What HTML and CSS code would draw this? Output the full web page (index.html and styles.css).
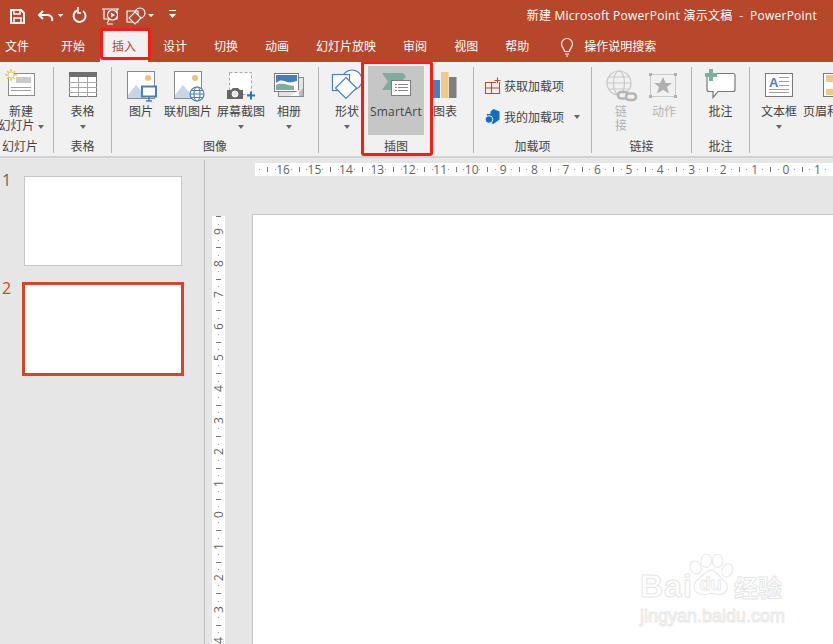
FILE: index.html
```html
<!DOCTYPE html>
<html lang="zh">
<head>
<meta charset="utf-8">
<title>PowerPoint</title>
<link rel="stylesheet" href="styles.css">
</head>
<body>
<div class="app">
  <header class="titlebar">
    <svg class="qat" viewBox="0 0 190 31">
      <g fill="none" stroke="#fff" stroke-width="2">
        <path d="M11 10h10l3 3v10H11z"/>
        <path d="M14 10v4h6v-4M14 23v-5h7v5" stroke-width="1.5"/>
        <path d="M43 11l-4 4 4 4" stroke-width="2"/>
        <path d="M39 15h9a4.500 4.500 0 0 1 4 6" stroke-width="2"/>
        <path d="M83 11a6 6 0 1 1-6-.5" stroke-width="2"/>
        <path d="M77 7v6h3" stroke-width="1.500" transform="translate(1 0)"/>
        <g stroke-width="1.200">
          <path d="M102 9h17M104 9v10h13V9"/>
          <circle cx="112.500" cy="15" r="5" fill="#b7472b"/>
          <path d="M111 12.500v5l4-2.500z" fill="#fff" stroke="none"/>
          <path d="M109 20l-2 3M107 24h6"/>
        </g>
        <g stroke-width="1.100">
          <path d="M127 11h11v11h-11z"/>
          <circle cx="140" cy="13" r="5"/>
          <path d="M135 12l6 6-6 6-6-6z" fill="#b7472b"/>
        </g>
      </g>
      <path d="M57.500 14h6l-3 3zM148 14h6l-3 3zM169 14h7l-3.500 4z" fill="#fff"/>
      <path d="M169 10.500h7" stroke="#fff" fill="none"/>
    </svg>
    <div class="doc-title">新建 Microsoft PowerPoint 演示文稿&nbsp; -&nbsp; PowerPoint</div>
  </header>

  <nav class="tabs">
    <span class="tab tab-file">文件</span>
    <span class="tab">开始</span>
    <span class="tab tab-active">插入</span>
    <span class="tab">设计</span>
    <span class="tab">切换</span>
    <span class="tab">动画</span>
    <span class="tab">幻灯片放映</span>
    <span class="tab">审阅</span>
    <span class="tab">视图</span>
    <span class="tab">帮助</span>
    <span class="tab tab-search">
      <svg class="bulb" viewBox="0 0 18 20"><path d="M6.500 14.500c0-3-3-4-3-7.500a5.500 5.500 0 0 1 11 0c0 3.500-3 4.500-3 7.500zM7 17h4M8 19h2" fill="none" stroke="#fff" stroke-width="1.200"/></svg>
      操作说明搜索
    </span>
  </nav>

  <section class="ribbon">
    <div class="group g-slide">
      <div class="btns">
        <div class="btn w42">
          <svg class="ico" viewBox="0 66 42 38">
            <rect x="8.500" y="73.500" width="26" height="22" fill="#fff" stroke="#8a8a8a"/>
            <rect x="16" y="77" width="15" height="6" fill="#c9c9c9"/>
            <path d="M11 87.500h20M11 90.500h20" stroke="#a0a0a0"/>
            <g stroke="#efc56f" stroke-width="1.600"><path d="M11 69v12M5 75h12M7 71l8 8M15 71l-8 8"/></g>
            <circle cx="11" cy="75" r="3" fill="#fff" stroke="#efc56f"/>
          </svg>
          <span class="cap">新建</span>
          <span class="cap">幻灯片 <i class="caret"></i></span>
        </div>
      </div>
      <div class="glabel">幻灯片</div>
    </div>

    <div class="group g-table">
      <div class="btns">
        <div class="btn w57">
          <svg class="ico" viewBox="54 66 57 38">
            <rect x="69.500" y="72.500" width="27" height="24" fill="#fff" stroke="#7a7a7a"/>
            <rect x="69" y="72" width="28" height="5" fill="#6f6f6f"/>
            <path d="M69 82.500h28M69 87.500h28M69 92.500h28M78.500 77v20M87.500 77v20" stroke="#a8a8a8"/>
          </svg>
          <span class="cap">表格</span>
          <span class="cap"><i class="caret"></i></span>
        </div>
      </div>
      <div class="glabel">表格</div>
    </div>

    <div class="group g-image">
      <div class="btns">
        <div class="btn w46">
          <svg class="ico" viewBox="118 66 46 38">
            <rect x="127.500" y="71.500" width="27" height="27" fill="#fff" stroke="#8a8a8a"/>
            <circle cx="148" cy="78" r="3" fill="#edc27a"/>
            <path d="M128 98v-3l8-10 6 7 4 6z" fill="#c5d6e8"/>
            <rect x="142" y="86.500" width="14" height="10" fill="#fff" stroke="#4a7ebb" stroke-width="2"/>
            <path d="M146 101h6M149 97v4" stroke="#4a7ebb" stroke-width="1.500"/>
          </svg>
          <span class="cap">图片</span>
        </div>
        <div class="btn w48">
          <svg class="ico" viewBox="164 66 48 38">
            <rect x="174.500" y="71.500" width="27" height="27" fill="#fff" stroke="#8a8a8a"/>
            <circle cx="195" cy="78" r="3" fill="#edc27a"/>
            <path d="M175 98v-3l8-10 6 7 4 6z" fill="#c5d6e8"/>
            <g fill="#fff" stroke="#4a7ebb" stroke-width="1.200">
              <circle cx="197" cy="94" r="7"/>
              <ellipse cx="197" cy="94" rx="3" ry="7"/>
              <path d="M190 94h14M191 90.500h12M191 97.500h12"/>
            </g>
          </svg>
          <span class="cap">联机图片</span>
        </div>
        <div class="btn w58">
          <svg class="ico" viewBox="212 66 58 38">
            <rect x="229.500" y="72.500" width="22" height="22" fill="#fff" stroke="#a8a8a8" stroke-dasharray="3 2"/>
            <path d="M227 90h4l2-2h5l2 2h3v9h-16z" fill="#666"/>
            <circle cx="235" cy="94" r="3" fill="#e8e8e8" stroke="#fff"/>
            <path d="M247 95.500h8M251 91.500v8" stroke="#2f75b5" stroke-width="2"/>
          </svg>
          <span class="cap">屏幕截图</span>
          <span class="cap"><i class="caret"></i></span>
        </div>
        <div class="btn w38">
          <svg class="ico" viewBox="270 66 38 38">
            <rect x="278.500" y="77.500" width="25" height="19" fill="#e4e4e4" stroke="#8a8a8a"/>
            <path d="M296 96l7-8v8z" fill="#bcbcbc"/>
            <rect x="274.500" y="73.500" width="24" height="18" fill="#fff" stroke="#7a7a7a"/>
            <rect x="276" y="75" width="21" height="8" fill="#4a7ebb"/>
            <path d="M276 83c5-4 8-2 11-1s6 0 10-1v3h-21z" fill="#fff"/>
            <path d="M276 85c5-2 9-1 12 0l6 1v4h-18z" fill="#7fac9c"/>
            <path d="M290 96l9-6v6z" fill="#fff"/>
          </svg>
          <span class="cap">相册</span>
          <span class="cap"><i class="caret"></i></span>
        </div>
      </div>
      <div class="glabel">图像</div>
    </div>

    <div class="group g-illus">
      <div class="btns">
        <div class="btn w38">
          <svg class="ico" viewBox="328 66 38 38">
            <circle cx="352" cy="80" r="10" fill="#fff" stroke="#4a7ebb" stroke-width="1.200"/>
            <rect x="332.500" y="74.500" width="17" height="16" fill="#fff" stroke="#4a7ebb" stroke-width="1.200"/>
            <path d="M346 77.500l10.500 10.500-10.500 10.500-10.500-10.500z" fill="#fff" stroke="#4a7ebb" stroke-width="1.200"/>
          </svg>
          <span class="cap">形状</span>
          <span class="cap"><i class="caret"></i></span>
        </div>
        <div class="btn w56 btn-hot">
          <svg class="ico" viewBox="368 66 56 38">
            <path d="M382 73h21v7h-12v10h-9l6-8.500z" fill="#7fac9c"/>
            <path d="M403 73l3 3.500-3 3.500z" fill="#7fac9c"/>
            <rect x="391.500" y="80.500" width="19" height="15" fill="#fff" stroke="#7d7d7d"/>
            <path d="M395 84.500h2M398 84.500h10M395 87.500h2M398 87.500h10M395 90.500h2M398 90.500h10" stroke="#8a8a8a"/>
          </svg>
          <span class="cap cap-sa">SmartArt</span>
        </div>
        <div class="btn w42">
          <svg class="ico" viewBox="424 66 42 38">
            <rect x="431" y="80" width="9" height="18" fill="#4a7ebb"/>
            <rect x="441" y="72" width="7.500" height="26" fill="#edc98a"/>
            <rect x="449" y="77" width="7.500" height="21" fill="#7f7f7f"/>
          </svg>
          <span class="cap">图表</span>
        </div>
      </div>
      <div class="glabel">插图</div>
      <div class="callout"></div>
    </div>

    <div class="group g-addin">
      <div class="btns rows">
        <div class="row">
          <svg class="ico-s" viewBox="0 0 18 18">
            <path d="M1.500 5.500h6v11h-6zM7.500 5.500h8v11h-8zM1.500 11h14M7.500 5.500V11" fill="none" stroke="#d04423" stroke-width="1.100"/>
            <path d="M10 3.500h7M13.500 0v7" stroke="#f1f1f1" stroke-width="3"/>
            <path d="M10.500 3.500h6M13.500 .500v6" stroke="#d04423" stroke-width="1.100"/>
          </svg>
          <span>获取加载项</span>
        </div>
        <div class="row">
          <svg class="ico-s" viewBox="0 0 18 18">
            <path d="M9.500 1l6 2.500v8L9.500 16 7 15v-5H3V6h3.500V3.500z" fill="#0f6fc6"/>
            <circle cx="5" cy="11.500" r="3.800" fill="#0f6fc6" stroke="#f1f1f1"/>
          </svg>
          <span>我的加载项</span>
          <i class="caret caret-row"></i>
        </div>
      </div>
      <div class="glabel">加载项</div>
    </div>

    <div class="group g-link">
      <div class="btns">
        <div class="btn w44 off">
          <svg class="ico" viewBox="599 66 44 38">
            <g fill="none" stroke="#c9c9c9" stroke-width="1.200">
              <circle cx="619" cy="83" r="12"/>
              <ellipse cx="619" cy="83" rx="5.500" ry="12"/>
              <path d="M607 83h24M609 77h20M609 89h20"/>
            </g>
            <g fill="#f1f1f1" stroke="#b5b5b5" stroke-width="2.600">
              <rect x="618" y="92" width="10" height="6.500" rx="3.200"/>
              <rect x="626" y="93.500" width="10" height="6.500" rx="3.200"/>
            </g>
          </svg>
          <span class="cap">链</span>
          <span class="cap">接</span>
        </div>
        <div class="btn w42 off">
          <svg class="ico" viewBox="643 66 42 38">
            <rect x="650.500" y="74.500" width="25" height="22" fill="none" stroke="#c9c9c9"/>
            <path d="M649 73h3v3h-3zM674 73h3v3h-3zM649 95h3v3h-3zM674 95h3v3h-3z" fill="#b0b0b0"/>
            <path d="M663 77l2.800 6h6.200l-5 4 2 6.500-6-3.800-6 3.800 2-6.500-5-4h6.200z" fill="#b0b0b0"/>
          </svg>
          <span class="cap">动作</span>
        </div>
      </div>
      <div class="glabel">链接</div>
    </div>

    <div class="group g-comment">
      <div class="btns">
        <div class="btn w57">
          <svg class="ico" viewBox="692 66 57 38">
            <path d="M709 73.500h24a2 2 0 0 1 2 2v14a2 2 0 0 1-2 2h-15l-5 6v-6h-4a2 2 0 0 1-2-2v-14z" fill="#fff" stroke="#7a7a7a" stroke-width="1.200"/>
            <path d="M705 75h12M711 69v12" stroke="#7fb09c" stroke-width="4"/>
          </svg>
          <span class="cap">批注</span>
        </div>
      </div>
      <div class="glabel">批注</div>
    </div>

    <div class="group g-text">
      <div class="btns">
        <div class="btn w48 first-text">
          <svg class="ico" viewBox="755 66 48 38">
            <rect x="765.500" y="73.500" width="27" height="23" fill="#fff" stroke="#7a7a7a"/>
            <text class="ico-a" x="769" y="87">A</text>
            <path d="M779 77.500h10M779 81.500h10M779 85.500h10M769 89.500h20M769 92.500h20" stroke="#a0a0a0"/>
          </svg>
          <span class="cap">文本框</span>
          <span class="cap"><i class="caret"></i></span>
        </div>
        <div class="btn w60">
          <svg class="ico" viewBox="802 66 60 38">
            <rect x="822.500" y="73.500" width="27" height="23" fill="#fff" stroke="#7a7a7a"/>
            <rect x="825" y="75" width="22" height="7" fill="#edc98a"/>
            <rect x="825" y="89" width="22" height="6" fill="#edc98a"/>
          </svg>
          <span class="cap">页眉和页脚</span>
        </div>
      </div>
    </div>
  </section>

  <main class="workspace">
    <aside class="thumbs">
      <div class="thumb-row"><span class="num">1</span><div class="thumb"></div></div>
      <div class="thumb-row thumb-row-on"><span class="num">2</span><div class="thumb"></div></div>
    </aside>
    <div class="editor">
      <div class="hruler">
        <span class="hlead"></span>
        <span class="hu">16</span><span class="hu">15</span><span class="hu">14</span><span class="hu">13</span><span class="hu">12</span><span class="hu">11</span><span class="hu">10</span><span class="hu">9</span><span class="hu">8</span><span class="hu">7</span><span class="hu">6</span><span class="hu">5</span><span class="hu">4</span><span class="hu">3</span><span class="hu">2</span><span class="hu">1</span><span class="hu">0</span><span class="hu">1</span>
      </div>
      <div class="stage">
        <div class="vruler">
          <span class="vu"><b>9</b></span><span class="vu"><b>8</b></span><span class="vu"><b>7</b></span><span class="vu"><b>6</b></span><span class="vu"><b>5</b></span><span class="vu"><b>4</b></span><span class="vu"><b>3</b></span><span class="vu"><b>2</b></span><span class="vu"><b>1</b></span><span class="vu"><b>0</b></span><span class="vu"><b>1</b></span><span class="vu"><b>2</b></span><span class="vu"><b>3</b></span><span class="vu"><b>4</b></span>
        </div>
        <div class="slide"></div>
      </div>
    </div>
  </main>

  <div class="watermark">
    <div class="wm-top">
      <span class="wm-bai">Bai</span>
      <svg class="wm-paw" viewBox="0 0 48 50">
        <g fill="#fff" stroke="#e9e9e9" stroke-width="1.200">
          <ellipse cx="8" cy="14" rx="5.500" ry="7" transform="rotate(-25 8 14)"/>
          <ellipse cx="19" cy="7" rx="5.500" ry="7"/>
          <ellipse cx="31" cy="7" rx="5.500" ry="7"/>
          <ellipse cx="41" cy="17" rx="5.500" ry="7" transform="rotate(25 41 17)"/>
          <path d="M24 17c6 0 8 7 13 10 7 5 4 16-5 15-3 0-5-1-8-1s-6 2-10 1C6 41 4 32 10 27c5-3 7-10 14-10z"/>
        </g>
        <text class="wm-du" x="12" y="38">du</text>
      </svg>
      <span class="wm-cn">经验</span>
    </div>
    <div class="wm-url">jingyan.baidu.com</div>
  </div>
</div>
</body>
</html>
```

FILE: styles.css
```css
* { box-sizing: border-box; }
html, body { margin: 0; padding: 0; }
body {
  width: 833px;
  height: 644px;
  overflow: hidden;
  font-family: "Open Sans", "Noto Sans CJK SC", sans-serif;
  font-size: 12px;
  color: #444;
  background: #e6e6e6;
}
.app { position: relative; width: 833px; height: 644px; overflow: hidden; display: flex; flex-direction: column; }

/* title bar */
.titlebar {
  height: 31px;
  flex: none;
  background: #b7472b;
  color: #fff;
  display: flex;
  align-items: center;
  justify-content: space-between;
  padding-right: 16px;
}
.qat { width: 190px; height: 31px; display: block; }
.doc-title { font-size: 12px; line-height: 31px; white-space: nowrap; letter-spacing: .25px; }

/* tabs */
.tabs {
  height: 31px;
  flex: none;
  background: #b7472b;
  color: #fff;
  display: flex;
  align-items: stretch;
  gap: 27px;
  padding-left: 5px;
  line-height: 31px;
  white-space: nowrap;
}
.tab { position: relative; }
.tab-file { margin-right: 5px; }
.tab-active {
  background: #f1f1f1;
  color: #b7472b;
  padding: 0 12px;
  margin: 0 -12px;
}
.tab-active::after {
  content: "";
  position: absolute;
  box-sizing: border-box;
  left: 0;
  top: -3px;
  width: 51px;
  height: 32px;
  border: 3px solid #f81c14;
  border-radius: 3px;
}
.tab-search { display: flex; align-items: center; gap: 8px; margin-left: 2px; }
.bulb { width: 18px; height: 20px; display: block; }

/* ribbon */
.ribbon {
  height: 96px;
  flex: none;
  background: #f1f1f1;
  border-bottom: 2px solid #d2d2d2;
  display: flex;
  align-items: flex-start;
  padding-top: 5px;
  overflow: hidden;
}
.group {
  position: relative;
  flex: none;
  height: 86px;
  display: flex;
  flex-direction: column;
  border-right: 1px solid #b4b4b4;
}
.btns { display: flex; height: 69px; margin-top: -1px; flex: none; }
.glabel { text-align: center; line-height: 18px; margin-top: 3px; }
.g-slide { width: 54px; }
.g-slide .glabel { width: 40px; }
.g-table { width: 58px; }
.g-image { width: 207px; }
.g-image .btns { padding-left: 6px; }
.g-illus { width: 155px; }
.g-illus .btns { padding-left: 9px; }
.g-addin { width: 118px; }
.g-link { width: 100px; }
.g-link .btns { padding-left: 7px; }
.g-comment { width: 58px; }
.g-text { width: 120px; border-right: none; }
.first-text { margin-left: 5px; }

.btn { display: flex; flex-direction: column; align-items: center; flex: none; white-space: nowrap; }
.w38 { width: 38px; }
.w42 { width: 42px; }
.w44 { width: 44px; }
.w46 { width: 46px; }
.w48 { width: 48px; }
.w56 { width: 56px; }
.w57 { width: 57px; }
.w58 { width: 58px; }
.w60 { width: 60px; }
.g-illus .w56 { margin-left: 2px; }
.ico { display: block; width: 100%; height: 38px; flex: none; overflow: hidden; margin-bottom: 1px; }
.cap { line-height: 14px; height: 14px; }
.cap-sa { font-size: 12px; color: #444; letter-spacing: .2px; }
.btn-hot { background: #c6c6c6; }
.off { color: #b3b3b3; }
.caret {
  display: inline-block;
  width: 0;
  height: 0;
  border-left: 3.5px solid transparent;
  border-right: 3.5px solid transparent;
  border-top: 4px solid #666;
  vertical-align: 1px;
}
.caret-row { margin-left: 8px; }
.ico-a { font-family: "Liberation Sans", sans-serif; font-weight: 700; font-size: 13px; fill: #4a7ebb; }

.rows { flex-direction: column; padding: 9px 0 0 10px; gap: 9px; }
.row { display: flex; align-items: center; height: 22px; white-space: nowrap; gap: 2px; }
.ico-s { width: 18px; height: 18px; display: block; flex: none; }

.callout {
  position: absolute;
  left: 42px;
  top: -6px;
  width: 72px;
  height: 95px;
  border: 3px solid #f81c14;
  border-radius: 3px;
}

/* workspace */
.workspace { flex: 1; min-height: 0; display: flex; background: #e6e6e6; }
.thumbs {
  width: 205px;
  flex: none;
  margin-top: 2px;
  border-right: 1px solid #bdbdbd;
  padding-top: 16px;
  display: flex;
  flex-direction: column;
  gap: 16px;
}
.thumb-row { display: flex; height: 90px; padding-left: 2px; }
.num { width: 22px; font-size: 16px; line-height: 16px; color: #666; flex: none; margin-top: -4px; }
.thumb { width: 158px; height: 90px; background: #fff; border: 1px solid #c6c6c6; }
.thumb-row-on { height: 94px; }
.thumb-row-on .num { width: 20px; color: #d24726; margin-top: -2px; }
.thumb-row-on .thumb { width: 162px; height: 94px; border: 3px solid #d24726; }

.editor { flex: 1; min-width: 0; display: flex; flex-direction: column; overflow: hidden; }
.hruler {
  flex: none;
  height: 13px;
  margin: 5px 0 0 50px;
  background: #fff;
  display: flex;
  overflow: hidden;
  color: #666;
  line-height: 13px;
}
.hlead {
  flex: none;
  width: 12.3px;
  background: linear-gradient(#999, #999) 4px 6px / 1px 1px no-repeat;
}
.hu {
  flex: none;
  width: 31.45px;
  text-align: center;
  background:
    linear-gradient(#777, #777) 0 4px / 1px 5px no-repeat,
    linear-gradient(#999, #999) 7.500px 6px / 1px 1px no-repeat,
    linear-gradient(#999, #999) 23.500px 6px / 1px 1px no-repeat;
}
.stage { flex: 1; min-height: 0; display: flex; gap: 27px; margin: 38px 0 0 7px; }
.vruler {
  flex: none;
  width: 13px;
  margin-top: 2px;
  background: #fff;
  display: flex;
  flex-direction: column;
  overflow: hidden;
  color: #666;
}
.vu {
  flex: none;
  height: 31.45px;
  display: flex;
  align-items: center;
  justify-content: center;
  background:
    linear-gradient(#777, #777) 4px 0 / 5px 1px no-repeat,
    linear-gradient(#999, #999) 6px 7.500px / 1px 1px no-repeat,
    linear-gradient(#999, #999) 6px 23.500px / 1px 1px no-repeat;
}
.vu b { font-weight: 400; line-height: 13px; writing-mode: vertical-rl; transform: rotate(180deg); }
.slide { flex: 1; height: 600px; background: #fff; border: 1px solid #c6c6c6; border-right: none; }

/* watermark */
.watermark { position: absolute; left: 640px; top: 554px; width: 150px; color: #fff; font-family: "Liberation Sans", sans-serif; }
.wm-top { display: flex; align-items: flex-end; height: 48px; }
.wm-bai { font-size: 32px; font-weight: 700; line-height: 32px; letter-spacing: 1px; -webkit-text-stroke: 1px #e6e6e6; width: 48px; flex: none; white-space: nowrap; }
.wm-paw { width: 46px; height: 48px; flex: none; display: block; }
.wm-du { font-size: 19px; font-family: "Liberation Sans", sans-serif; font-weight: 700; fill: #fff; stroke: #e6e6e6; stroke-width: .8px; }
.wm-cn { font-family: "Noto Sans CJK SC", sans-serif; font-size: 24px; line-height: 30px; font-weight: 700; -webkit-text-stroke: 1px #e6e6e6; white-space: nowrap; }
.wm-url { font-size: 18px; line-height: 20px; margin-top: 4px; white-space: nowrap; font-weight: 400; -webkit-text-stroke: 1px #e8e8e8; }
```
